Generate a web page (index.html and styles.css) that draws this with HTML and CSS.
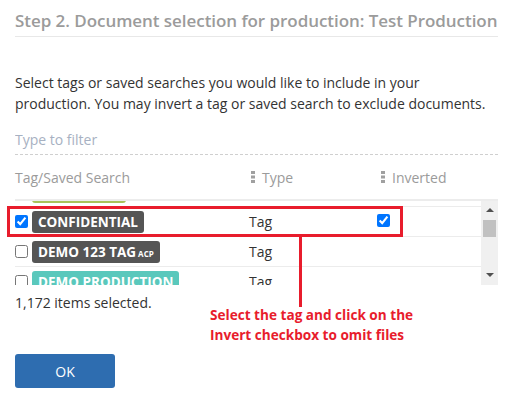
FILE: index.html
```html
<!DOCTYPE html>
<html lang="en">
    <head>
        <meta charset="UTF-8" />
        <meta name="viewport" content="width=device-width, initial-scale=1.0" />
        <title>Production Wizard</title>

        <link rel="stylesheet" href="styles.css">
    </head>

    <body>
        <div class="wizard">
            <h2 class="step-title">Step 2. Document selection for production: Test Production</h2>

            <p class="intro">Select tags or saved searches you would like to include in your production. You may invert a tag or saved search to exclude documents.</p>

            <input class="filter" type="text" placeholder="Type to filter">

            <div class="grid">
                <div class="grid-head">
                    <div class="col-name">Tag/Saved Search</div>
                    <div class="col-type">
                        <svg class="grip" width="4" height="12" viewBox="0 0 4 12"><rect x="0" y="0" width="4" height="3"/><rect x="0" y="4.5" width="4" height="3"/><rect x="0" y="9" width="4" height="3"/></svg>
                        Type
                    </div>
                    <div class="col-inv">
                        <svg class="grip" width="4" height="12" viewBox="0 0 4 12"><rect x="0" y="0" width="4" height="3"/><rect x="0" y="4.5" width="4" height="3"/><rect x="0" y="9" width="4" height="3"/></svg>
                        Inverted
                    </div>
                </div>

                <div class="grid-body">
                    <div class="rows">
                        <div class="row">
                            <div class="col-name"><input type="checkbox"><span class="tag tag-green">RESPONSIVE</span></div>
                            <div class="col-type">Tag</div>
                            <div class="col-inv"></div>
                        </div>
                        <div class="row">
                            <div class="col-name"><input type="checkbox" checked><span class="tag">CONFIDENTIAL</span></div>
                            <div class="col-type">Tag</div>
                            <div class="col-inv"><input type="checkbox" checked></div>
                        </div>
                        <div class="row">
                            <div class="col-name"><input type="checkbox"><span class="tag">DEMO 123 TAG<small>ACP</small></span></div>
                            <div class="col-type">Tag</div>
                            <div class="col-inv"></div>
                        </div>
                        <div class="row">
                            <div class="col-name"><input type="checkbox"><span class="tag tag-teal">DEMO PRODUCTION</span></div>
                            <div class="col-type">Tag</div>
                            <div class="col-inv"></div>
                        </div>
                    </div>

                    <!-- classic scrollbar track on the right of the list -->
                    <div class="scrollbar">
                        <span class="arrow up"></span>
                        <span class="thumb"></span>
                        <span class="arrow down"></span>
                    </div>
                </div>

                <!-- callout around the selected row -->
                <div class="callout"></div>
                <div class="callout-line"></div>
            </div>

            <div class="footer">
                <p class="count">1,172 items selected.</p>
                <p class="note">Select the tag and click on the<br>Invert checkbox to omit files</p>
            </div>

            <button class="ok">OK</button>
        </div>
    </body>
</html>
```

FILE: styles.css
```css
body {
    margin: 0;
    background: #fff;
    font-family: "Open Sans", "Noto Sans", sans-serif;
    color: #333;
}

.wizard {
    padding: 0 13px 0 15px;
}

.step-title {
    margin: 0;
    padding: 9px 0 4px;
    font-size: 17px;
    font-weight: 600;
    color: #9b9b9b;
    border-bottom: 1px solid #e8e8e8;
    white-space: nowrap;
    letter-spacing: -0.05px;
}

.intro {
    margin: 35px 0 0;
    font-size: 14px;
    line-height: 21px;
}

.filter {
    display: block;
    width: 100%;
    box-sizing: border-box;
    margin-top: 12px;
    padding: 4px 0 5px;
    border: none;
    border-bottom: 1px dashed #cfcfcf;
    font-family: inherit;
    font-size: 14px;
    outline: none;
}
.filter::placeholder {
    color: #a7b1c2;
}

/* tag grid */
.grid {
    position: relative;
    font-size: 14px;
}

.grid-head,
.row {
    display: grid;
    grid-template-columns: 234px 128px 1fr;
    align-items: center;
}

.grid-head {
    height: 44px;
    border-bottom: 2px solid #ececec;
    color: #9b9b9b;
    font-size: 14px;
}
.grid-head .col-type,
.grid-head .col-inv {
    display: flex;
    align-items: center;
    gap: 7px;
    padding-left: 2px;
}
.grid-head .col-inv {
    padding-left: 4px;
}
.grip {
    fill: #a0a0a0;
}

.grid-body {
    display: flex;
    height: 84px;
    overflow: hidden;
}

.rows {
    flex: 1;
    margin-top: -24px;
}

.row {
    height: 29px;
    border-bottom: 1px solid #ececec;
}

.col-name {
    display: flex;
    align-items: center;
    gap: 4px;
}

.row input[type="checkbox"] {
    width: 13px;
    height: 13px;
    margin: 0;
}

.tag {
    display: inline-block;
    height: 22px;
    line-height: 22px;
    padding: 0 6px;
    border-radius: 3px;
    background: #555;
    color: #fff;
    font-weight: 700;
    font-size: 13.5px;
    white-space: nowrap;
}
.tag small {
    font-size: 8px;
    margin-left: 2px;
}
.tag-green {
    background: #a9c25a;
}
.tag-teal {
    background: #5ac8bc;
}

.scrollbar {
    width: 17px;
    background: #f0f0f0;
    display: flex;
    flex-direction: column;
    align-items: center;
}
.arrow {
    width: 0;
    height: 0;
    border-left: 4px solid transparent;
    border-right: 4px solid transparent;
}
.arrow.up {
    margin-top: 7px;
    border-bottom: 4px solid #505050;
}
.arrow.down {
    margin-top: auto;
    margin-bottom: 8px;
    border-top: 4px solid #505050;
}
.thumb {
    width: 13px;
    height: 17px;
    margin-top: 8px;
    background: #c1c1c1;
}

.callout {
    position: absolute;
    left: -8px;
    top: 51px;
    width: 390px;
    height: 25px;
    border: 3px solid #e81c2c;
    pointer-events: none;
}
.callout-line {
    position: absolute;
    left: 284px;
    top: 80px;
    width: 3px;
    height: 72px;
    background: #e81c2c;
}

.footer {
    display: flex;
    align-items: flex-start;
}

.count {
    margin: 8px 0 0;
    font-size: 14px;
    width: 195px;
}

.note {
    margin: 20px 0 0;
    color: #e81c2c;
    font-weight: 700;
    font-size: 13.6px;
    line-height: 20px;
}

.ok {
    display: block;
    margin-top: 9px;
    width: 100px;
    height: 34px;
    border: none;
    border-radius: 3px;
    background: #2e6db0;
    color: #fff;
    font-family: inherit;
    font-size: 14px;
}
```
